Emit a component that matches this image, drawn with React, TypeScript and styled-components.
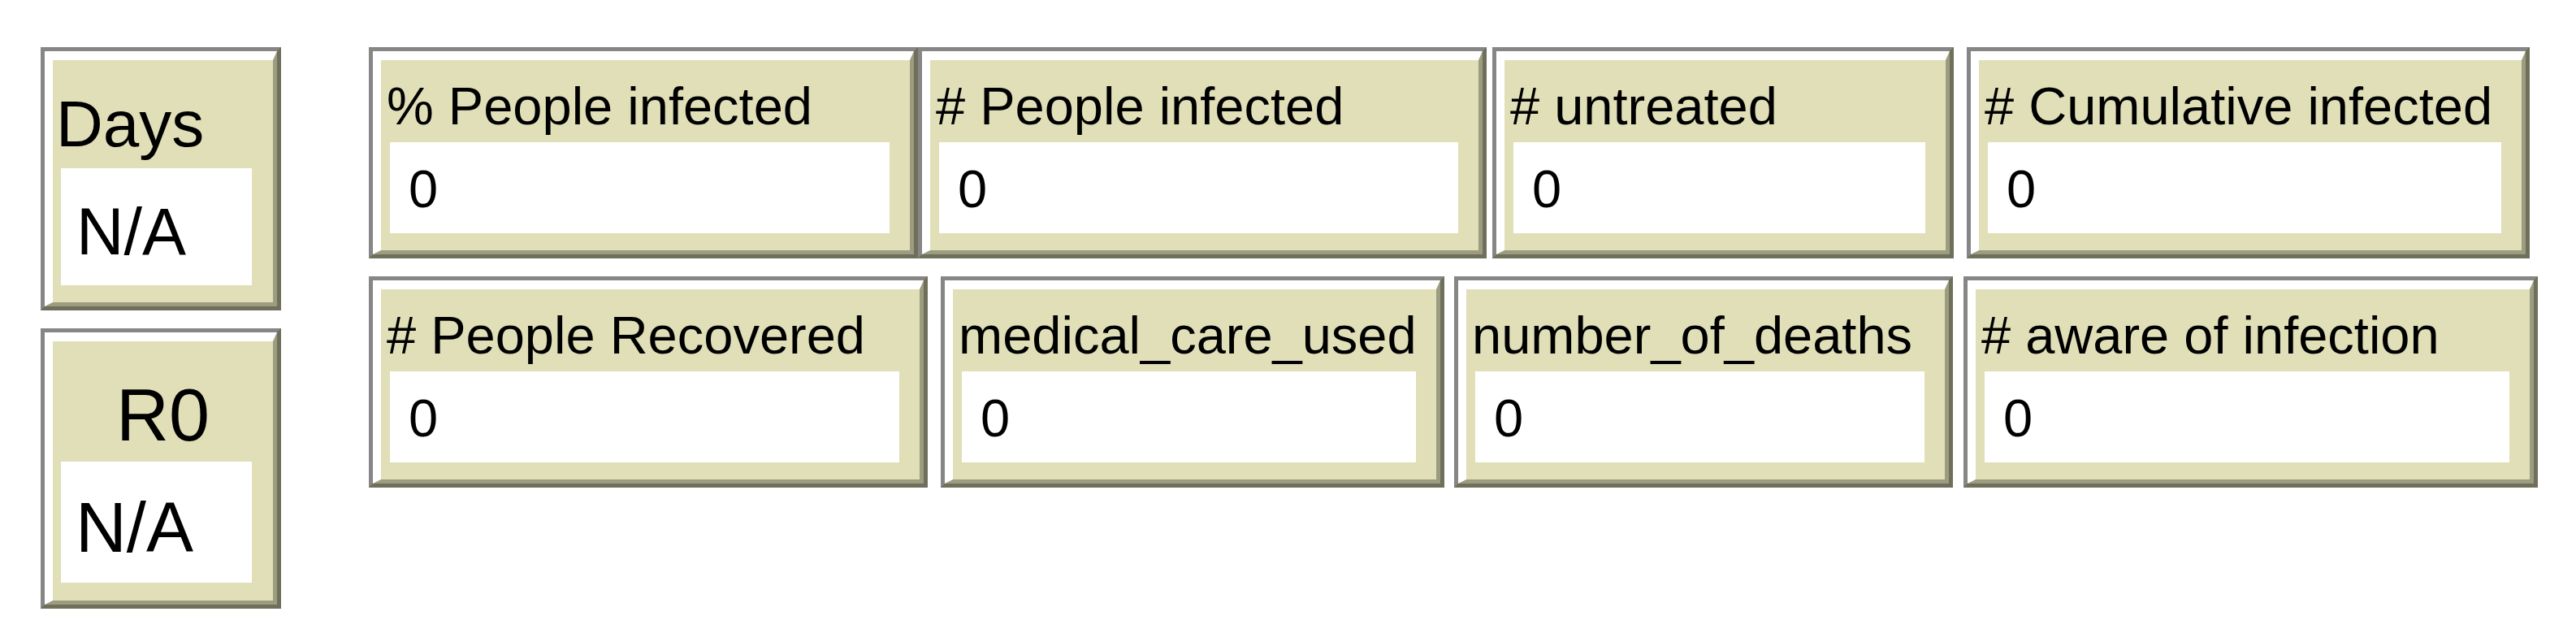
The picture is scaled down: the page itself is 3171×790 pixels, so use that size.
import React from "react";
import styled, { createGlobalStyle } from "styled-components";

const GlobalStyle = createGlobalStyle`
  html, body {
    margin: 0;
    padding: 0;
    background: #ffffff;
  }
  body {
    font-family: "Liberation Sans", Arial, sans-serif;
    color: #000000;
  }
`;

const Page = styled.div`
  display: flex;
  align-items: flex-start;
  box-sizing: border-box;
  width: 3171px;
  height: 790px;
  padding: 58px 0 0 50px;
  background: #ffffff;
`;

const SideColumn = styled.div`
  display: flex;
  flex-direction: column;
  gap: 22px;
  width: 296px;
  flex: none;
`;

const MonitorGrid = styled.div`
  display: flex;
  flex-direction: column;
  gap: 22px;
  margin-left: 108px;
`;

const MonitorRow = styled.div`
  display: flex;
  align-items: flex-start;
`;

const Frame = styled.div<{ $w: number; $h: number; $gap: number }>`
  box-sizing: border-box;
  flex: none;
  width: ${(p) => p.$w}px;
  height: ${(p) => p.$h}px;
  margin-left: ${(p) => p.$gap}px;
  border: 5px solid;
  border-color: #868686 #6f6f5b #6f6f5b #868686;
`;

const Bevel = styled.div<{ $padTop: number }>`
  box-sizing: border-box;
  height: 100%;
  display: flex;
  flex-direction: column;
  padding-top: ${(p) => p.$padTop}px;
  border-style: solid;
  border-width: 11px 5px 5px 10px;
  border-color: #ffffff #9c9c80 #9c9c80 #ffffff;
  background: #e0dfb7;
`;

const Label = styled.div<{ $size: number; $padLeft: number; $center?: boolean }>`
  font-family: "Liberation Sans", Arial, sans-serif;
  font-size: ${(p) => p.$size}px;
  line-height: ${(p) => p.$size}px;
  height: ${(p) => p.$size}px;
  padding-left: ${(p) => p.$padLeft}px;
  text-align: ${(p) => (p.$center ? "center" : "left")};
  white-space: nowrap;
  color: #000000;
`;

const ValueBox = styled.div<{
  $gapTop: number;
  $h: number;
  $size: number;
  $padTop: number;
  $lh: number;
  $padLeft: number;
  $left: number;
  $right: number;
}>`
  box-sizing: border-box;
  margin: ${(p) => `${p.$gapTop}px ${p.$right}px 0 ${p.$left}px`};
  height: ${(p) => p.$h}px;
  padding: ${(p) => `${p.$padTop}px 0 0 ${p.$padLeft}px`};
  background: #ffffff;
  font-family: "Liberation Sans", Arial, sans-serif;
  font-size: ${(p) => p.$size}px;
  line-height: ${(p) => p.$lh}px;
  white-space: nowrap;
  color: #000000;
`;

type Spec = {
  h: number;
  padTop: number;
  labelSize: number;
  labelPad: number;
  center?: boolean;
  gapTop: number;
  valueH: number;
  valueSize: number;
  valuePadTop: number;
  valueLh: number;
  valuePadLeft: number;
  valueLeft: number;
  valueRight: number;
};

const gridSpec: Spec = {
  h: 260,
  padTop: 24,
  labelSize: 65,
  labelPad: 7,
  gapTop: 12,
  valueH: 112,
  valueSize: 65,
  valuePadTop: 3,
  valueLh: 109,
  valuePadLeft: 23,
  valueLeft: 11,
  valueRight: 25,
};

const daysSpec: Spec = {
  h: 324,
  padTop: 39,
  labelSize: 80,
  labelPad: 4,
  gapTop: 14,
  valueH: 144,
  valueSize: 81,
  valuePadTop: 12,
  valueLh: 132,
  valuePadLeft: 19,
  valueLeft: 10,
  valueRight: 26,
};

const r0Spec: Spec = {
  h: 345,
  padTop: 46,
  labelSize: 90,
  labelPad: 0,
  center: true,
  gapTop: 12,
  valueH: 149,
  valueSize: 87,
  valuePadTop: 13,
  valueLh: 136,
  valuePadLeft: 18,
  valueLeft: 10,
  valueRight: 26,
};

function Monitor({
  label,
  value,
  width,
  gap = 0,
  spec,
}: {
  label: string;
  value: string;
  width: number;
  gap?: number;
  spec: Spec;
}) {
  return (
    <Frame $w={width} $h={spec.h} $gap={gap}>
      <Bevel $padTop={spec.padTop}>
        <Label $size={spec.labelSize} $padLeft={spec.labelPad} $center={spec.center}>
          {label}
        </Label>
        <ValueBox
          $gapTop={spec.gapTop}
          $h={spec.valueH}
          $size={spec.valueSize}
          $padTop={spec.valuePadTop}
          $lh={spec.valueLh}
          $padLeft={spec.valuePadLeft}
          $left={spec.valueLeft}
          $right={spec.valueRight}
        >
          {value}
        </ValueBox>
      </Bevel>
    </Frame>
  );
}

const row1 = [
  { label: "% People infected", width: 676, gap: 0 },
  { label: "# People infected", width: 700, gap: 0 },
  { label: "# untreated", width: 568, gap: 7 },
  { label: "# Cumulative infected", width: 693, gap: 16 },
];

const row2 = [
  { label: "# People Recovered", width: 688, gap: 0 },
  { label: "medical_care_used", width: 620, gap: 16 },
  { label: "number_of_deaths", width: 614, gap: 12 },
  { label: "# aware of infection", width: 707, gap: 13 },
];

export default function App() {
  return (
    <>
      <GlobalStyle />
      <Page>
        <SideColumn>
          <Monitor label="Days" value="N/A" width={296} spec={daysSpec} />
          <Monitor label="R0" value="N/A" width={296} spec={r0Spec} />
        </SideColumn>
        <MonitorGrid>
          <MonitorRow>
            {row1.map((m) => (
              <Monitor key={m.label} label={m.label} value="0" width={m.width} gap={m.gap} spec={gridSpec} />
            ))}
          </MonitorRow>
          <MonitorRow>
            {row2.map((m) => (
              <Monitor key={m.label} label={m.label} value="0" width={m.width} gap={m.gap} spec={gridSpec} />
            ))}
          </MonitorRow>
        </MonitorGrid>
      </Page>
    </>
  );
}
